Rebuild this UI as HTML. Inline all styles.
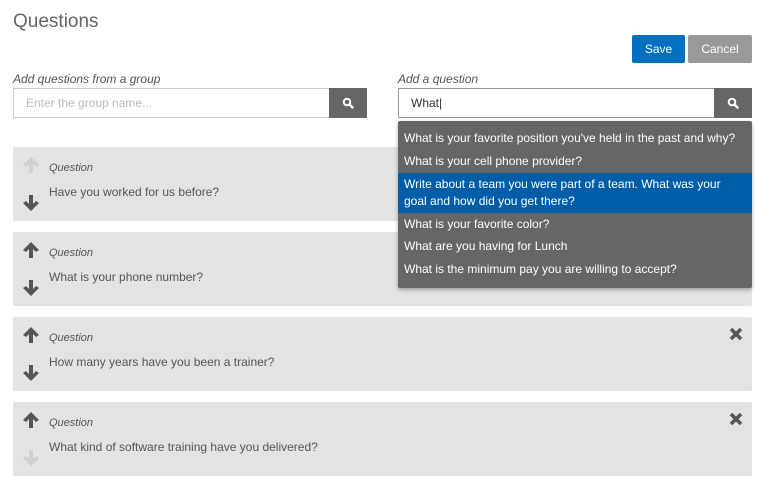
<!DOCTYPE html>
<html><head><style>
*{box-sizing:border-box;margin:0;padding:0}
body{width:776px;height:492px;background:#fff;font-family:"Liberation Sans",sans-serif;color:#555;position:relative;overflow:hidden}
.a{position:absolute}
.lbl{font-size:12px;font-style:italic;color:#555}
.inp{border:1px solid #ccc;background:#fff;height:30px;font-size:12px;padding:0 12px;line-height:28px}
.sb{background:#666;height:30px;width:38px;display:flex;align-items:center;justify-content:center}
.card{left:13px;width:739px;height:74px;background:#e3e3e3;border-radius:2px}
.card .q{position:absolute;left:36px;top:15px;font-size:11px;font-style:italic;color:#555}
.card .t{position:absolute;left:36px;top:38px;font-size:12px;color:#555}
.card .up{position:absolute;left:9px;top:9px}
.card .dn{position:absolute;left:9px;top:47px}
.card .x{position:absolute;right:9px;top:10px}
.dd div{font-size:12px;color:#fff;padding:0 6px;line-height:20px}
</style></head><body>
<div class="a" style="left:13px;top:11px;font-size:19px;color:#666">Questions</div>
<div class="a" style="left:632px;top:35px;width:53px;height:28px;background:#0071c1;color:#fff;font-size:12px;text-align:center;line-height:28px;border-radius:2px">Save</div>
<div class="a" style="left:688px;top:35px;width:64px;height:28px;background:#999;color:#fff;font-size:12px;text-align:center;line-height:28px;border-radius:2px">Cancel</div>
<div class="a lbl" style="left:13px;top:72px">Add questions from a group</div>
<div class="a inp" style="left:13px;top:88px;width:317px;color:#bbb">Enter the group name...</div>
<div class="a sb" style="left:329px;top:88px"><svg width="12" height="12" viewBox="0 0 12 12"><circle cx="5" cy="5" r="3.3" fill="none" stroke="#fff" stroke-width="2"/><path d="M7.5 7.5L10.5 10.5" stroke="#fff" stroke-width="2.4" stroke-linecap="round"/></svg></div>
<div class="a lbl" style="left:398px;top:72px">Add a question</div>
<div class="a inp" style="left:398px;top:88px;width:317px;color:#333;border-color:#999">What|</div>
<div class="a sb" style="left:714px;top:88px"><svg width="12" height="12" viewBox="0 0 12 12"><circle cx="5" cy="5" r="3.3" fill="none" stroke="#fff" stroke-width="2"/><path d="M7.5 7.5L10.5 10.5" stroke="#fff" stroke-width="2.4" stroke-linecap="round"/></svg></div>

<div class="a card" style="top:147px"><svg class="up" width="18" height="18" viewBox="0 0 18 18"><path d="M9 1L17 9L14 11L11 8V17H7V8L4 11L1 9Z" fill="#d0d0d0"/></svg><div class="q">Question</div><div class="t">Have you worked for us before?</div><svg class="dn" width="18" height="18" viewBox="0 0 18 18"><path d="M9 17L17 9L14 7L11 10V1H7V10L4 7L1 9Z" fill="#555"/></svg></div>
<div class="a card" style="top:232px"><svg class="up" width="18" height="18" viewBox="0 0 18 18"><path d="M9 1L17 9L14 11L11 8V17H7V8L4 11L1 9Z" fill="#555"/></svg><div class="q">Question</div><div class="t">What is your phone number?</div><svg class="dn" width="18" height="18" viewBox="0 0 18 18"><path d="M9 17L17 9L14 7L11 10V1H7V10L4 7L1 9Z" fill="#555"/></svg></div>
<div class="a card" style="top:317px"><svg class="up" width="18" height="18" viewBox="0 0 18 18"><path d="M9 1L17 9L14 11L11 8V17H7V8L4 11L1 9Z" fill="#555"/></svg><div class="q">Question</div><div class="t">How many years have you been a trainer?</div><svg class="dn" width="18" height="18" viewBox="0 0 18 18"><path d="M9 17L17 9L14 7L11 10V1H7V10L4 7L1 9Z" fill="#555"/></svg><svg class="x" width="14" height="14" viewBox="0 0 14 14"><path d="M2 2L12 12M12 2L2 12" stroke="#555" stroke-width="3.5"/></svg></div>
<div class="a card" style="top:402px"><svg class="up" width="18" height="18" viewBox="0 0 18 18"><path d="M9 1L17 9L14 11L11 8V17H7V8L4 11L1 9Z" fill="#555"/></svg><div class="q">Question</div><div class="t">What kind of software training have you delivered?</div><svg class="dn" width="18" height="18" viewBox="0 0 18 18"><path d="M9 17L17 9L14 7L11 10V1H7V10L4 7L1 9Z" fill="#d0d0d0"/></svg><svg class="x" width="14" height="14" viewBox="0 0 14 14"><path d="M2 2L12 12M12 2L2 12" stroke="#555" stroke-width="3.5"/></svg></div>

<div class="a dd" style="left:398px;top:121px;width:354px;height:167px;background:#666;padding-top:6px;box-shadow:0 2px 4px rgba(0,0,0,.3);border-radius:2px">
<div style="line-height:22px">What is your favorite position you've held in the past and why?</div>
<div style="line-height:24px">What is your cell phone provider?</div>
<div style="background:#005ea8;padding:3px 6px;line-height:17px">Write about a team you were part of a team. What was your goal and how did you get there?</div>
<div style="line-height:22px">What is your favorite color?</div>
<div style="line-height:23px">What are you having for Lunch</div>
<div style="line-height:23px">What is the minimum pay you are willing to accept?</div>
</div>
</body></html>
